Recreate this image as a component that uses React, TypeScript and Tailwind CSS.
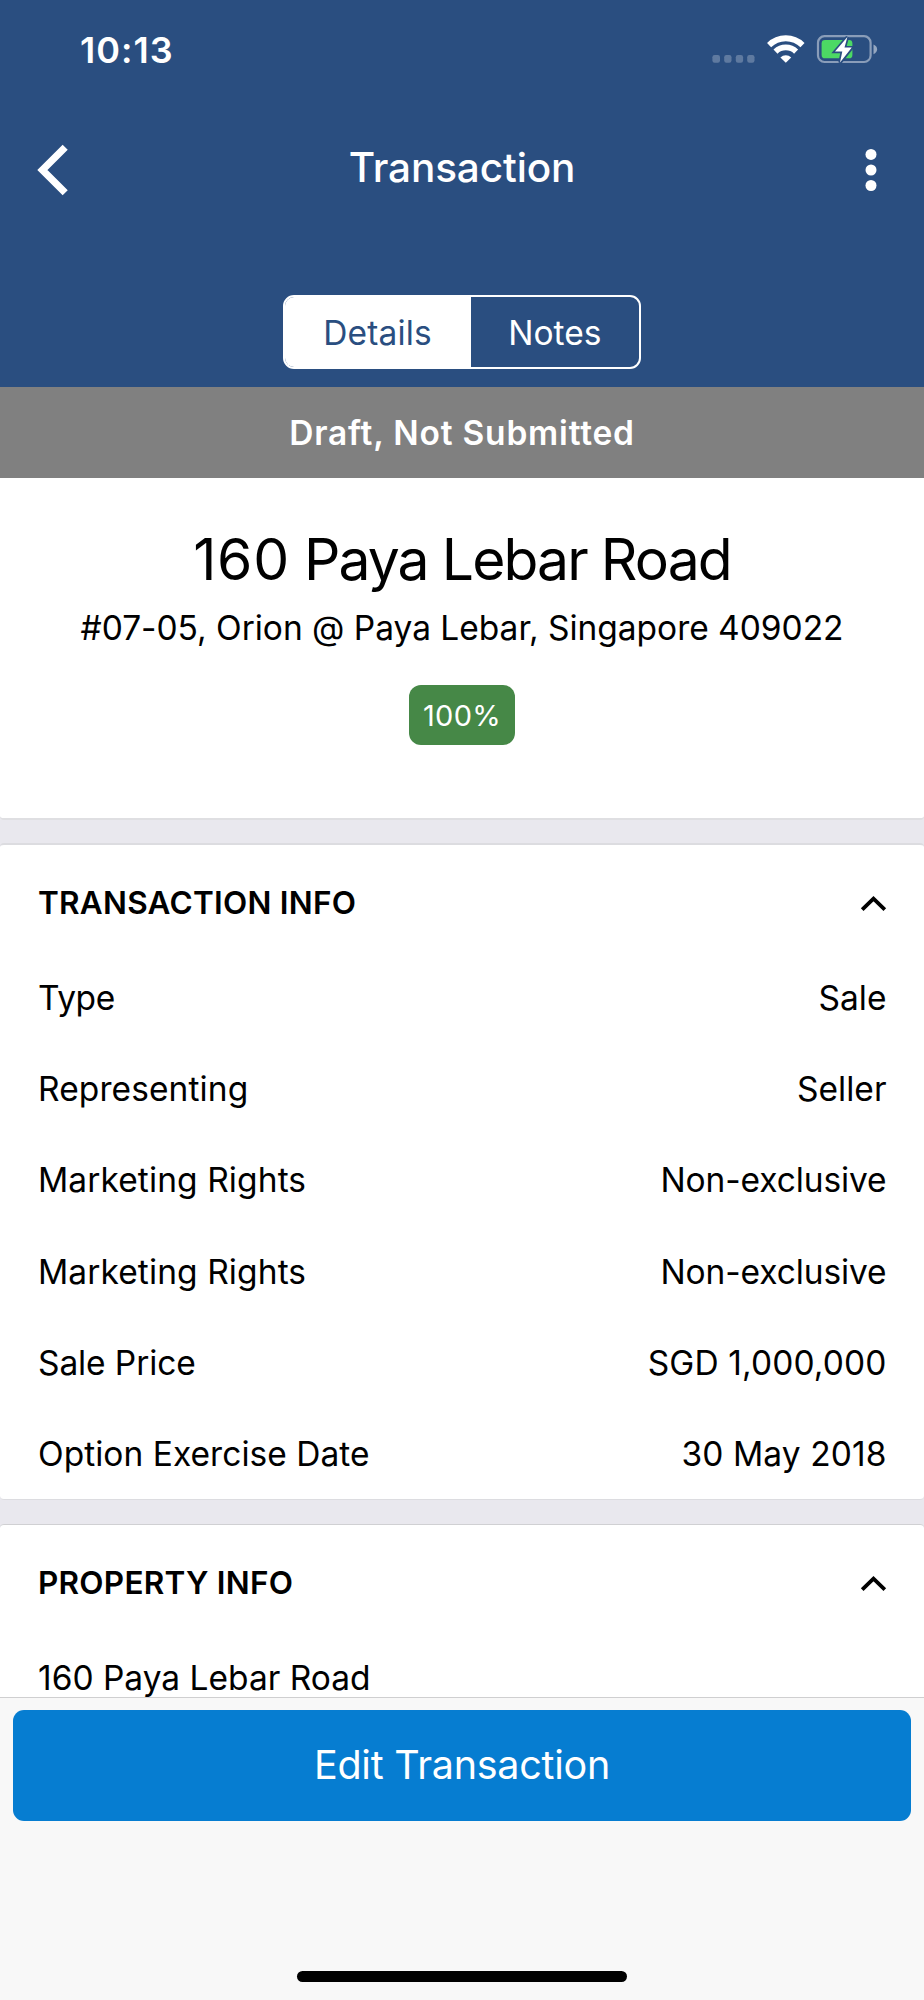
type Field = { label: string; value?: string; tracking?: string; valueTracking?: string };

const transactionFields: Field[] = [
  { label: "Type", value: "Sale", tracking: "tracking-[-0.4px]" },
  { label: "Representing", value: "Seller", tracking: "tracking-[0.1px]" },
  { label: "Marketing Rights", value: "Non-exclusive", tracking: "tracking-[0.1px]", valueTracking: "tracking-[-0.1px]" },
  { label: "Marketing Rights", value: "Non-exclusive", tracking: "tracking-[0.1px]", valueTracking: "tracking-[-0.1px]" },
  { label: "Sale Price", value: "SGD 1,000,000", tracking: "tracking-[-0.1px]", valueTracking: "tracking-[0.12px]" },
  { label: "Option Exercise Date", value: "30 May 2018", tracking: "tracking-[0.04px]", valueTracking: "tracking-[0.1px]" },
];

function StatusIcons() {
  return (
    <svg className="h-10 w-[168px]" viewBox="711 30 168 40" fill="none" aria-hidden="true">
      <g fill="#fff" fillOpacity="0.25">
        <rect x="712.4" y="55" width="7.6" height="7.7" rx="2.2" />
        <rect x="724.2" y="55" width="7.3" height="7.7" rx="2.2" />
        <rect x="735.8" y="55" width="7.3" height="7.7" rx="2.2" />
        <rect x="747.2" y="55" width="7.3" height="7.7" rx="2.2" />
      </g>
      <g stroke="#fff" strokeWidth="5.8">
        <path d="M769.1 45.1 A23.8 23.8 0 0 1 802.5 45.1" />
        <path d="M775.5 51.6 A14.9 14.9 0 0 1 796.1 51.6" />
      </g>
      <path d="M780.4 57.4 A8 8 0 0 1 791.2 57.4 L785.8 62.8 Z" fill="#fff" />
      <rect x="818" y="36.2" width="52.6" height="25.8" rx="6.5" stroke="#fff" strokeOpacity="0.45" strokeWidth="2.2" />
      <path d="M873.5 44.5 C876 45.5 877.1 47.3 877.1 49.3 C877.1 51.3 876 53.2 873.5 54.2 Z" fill="#fff" fillOpacity="0.5" />
      <rect x="821.6" y="40" width="30.8" height="18.3" rx="3.4" fill="#4cd964" />
      <path d="M847.4 37 L835 51.6 H842.3 L840 62.6 L851.8 47.6 H844.5 Z" fill="#2a4e80" stroke="#2a4e80" strokeWidth="3.4" />
      <path d="M847.4 37 L835 51.6 H842.3 L840 62.6 L851.8 47.6 H844.5 Z" fill="#fff" />
    </svg>
  );
}

function SectionHeader({ title }: { title: string }) {
  return (
    <div className="flex h-[107.2px] items-center justify-between pt-[7.4px]">
      <h2 className="text-[31.5px] font-semibold tracking-[0.25px]">{title}</h2>
      <svg className="mt-[3px] h-[18px] w-[27px]" viewBox="0 0 27 18" fill="none" aria-hidden="true">
        <path d="M2.2 14.6 L13.5 3.6 L24.8 14.6" stroke="#000" strokeWidth="3.8" />
      </svg>
    </div>
  );
}

function Row({ label, value, tracking = "", valueTracking = "" }: Field) {
  return (
    <div className="flex h-[91.16px] items-center justify-between pt-[1px] text-[33.5px]">
      <span className={tracking}>{label}</span>
      {value && <span className={valueTracking}>{value}</span>}
    </div>
  );
}

export default function App() {
  return (
    <div className="flex h-[2000px] w-[924px] flex-col overflow-hidden bg-[#e9e8ee] font-['Inter','Liberation_Sans',sans-serif] text-black">
      <header className="flex h-[387px] shrink-0 flex-col bg-[#2a4e80] text-white">
        <div className="flex h-[99px] items-center justify-between pr-[45px] pl-[80px]">
          <span className="text-[36px] font-semibold tracking-[1px]">10:13</span>
          <StatusIcons />
        </div>
        <div className="grid h-[138px] grid-cols-[100px_1fr_100px] items-center">
          <svg className="mt-[3px] ml-[37px] h-[52px] w-[32px]" viewBox="0 0 32 52" fill="none" aria-label="Back">
            <path d="M28.2 3.2 L5.4 26 L28.2 48.8" stroke="#fff" strokeWidth="7.2" />
          </svg>
          <h1 className="pt-[1px] text-center text-[40.5px] font-medium tracking-[-0.12px]">Transaction</h1>
          <svg className="mt-[3px] ml-[41px] h-[44px] w-[12px]" viewBox="0 0 12 44" fill="#fff" aria-label="More">
            <circle cx="6" cy="6.4" r="5.5" />
            <circle cx="6" cy="22" r="5.5" />
            <circle cx="6" cy="37.5" r="5.5" />
          </svg>
        </div>
        <div className="mt-[58px] ml-[282.6px] flex h-[74px] w-[358.6px] overflow-hidden rounded-[11px] border-2 border-white text-[33.5px]">
          <button className="w-[186px] bg-white pt-[3px] tracking-[0.15px] text-[#2a4e80]">Details</button>
          <button className="flex-1 pt-[3px]">Notes</button>
        </div>
      </header>

      <main className="flex h-[1310px] shrink-0 flex-col overflow-hidden">
        <div className="flex h-[91px] shrink-0 items-center justify-center bg-[#808080] pt-[1px] text-[33.5px] font-semibold tracking-[0.8px] text-white">
          Draft, Not Submitted
        </div>

        <section className="flex h-[342px] shrink-0 flex-col items-center rounded-b-[4px] border-b-2 border-[#dfdfe2] bg-white pt-[52px]">
          <h2 className="text-[57px] leading-[60px] tracking-[-1.9px]">
            <span className="tracking-[0.7px]">160</span> Paya Lebar Road
          </h2>
          <p className="mt-[16px] text-[33.5px] leading-[45px] tracking-[-0.02px]">#07-05, Orion @ Paya Lebar, Singapore 409022</p>
          <span className="mt-[34px] flex h-[60px] w-[106px] items-center justify-center rounded-[12px] bg-[#468847] pt-[1px] text-[29px] tracking-[0.3px] text-white">
            100%
          </span>
        </section>

        <section className="mt-[23px] h-[657px] shrink-0 rounded-[4px] border-t-2 border-b border-[#dcdce0] bg-white pr-[37.5px] pl-[38px]">
          <SectionHeader title="TRANSACTION INFO" />
          {transactionFields.map((field, i) => (
            <Row key={i} {...field} />
          ))}
        </section>

        <section className="mt-[24px] h-[300px] shrink-0 rounded-t-[4px] border-t border-[#d0d0d3] bg-white pr-[37.5px] pl-[38px]">
          <SectionHeader title="PROPERTY INFO" />
          <Row label="160 Paya Lebar Road" />
        </section>
      </main>

      <footer className="flex flex-1 flex-col items-center justify-between border-t border-[#cfcfd0] bg-[#f8f8f8] px-[13px] pt-[12px] pb-[18px]">
        <button className="h-[110.6px] w-full rounded-[11px] bg-[#067dd1] pt-[1px] text-[39.5px] tracking-[-0.26px] text-white">
          Edit Transaction
        </button>
        <div className="h-[11px] w-[330px] rounded-full bg-black" />
      </footer>
    </div>
  );
}
